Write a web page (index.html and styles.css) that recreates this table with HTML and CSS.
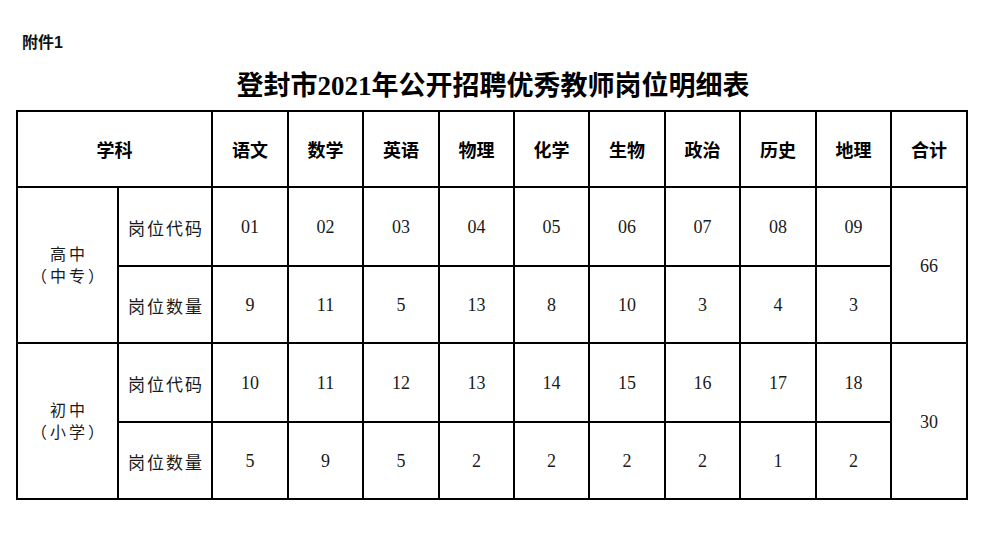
FILE: index.html
```html
<!DOCTYPE html>
<html lang="zh-CN">
<head>
<meta charset="utf-8">
<title>登封市2021年公开招聘优秀教师岗位明细表</title>
<link rel="stylesheet" href="styles.css">
</head>
<body>
<div class="page">
  <div class="note">附件1</div>
  <h1 class="title">登封市2021年公开招聘优秀教师岗位明细表</h1>
  <table class="grid">
    <colgroup>
      <col class="c1"><col class="c2">
      <col class="cw"><col class="cn"><col class="cw"><col class="cn"><col class="cn">
      <col class="cw"><col class="cn"><col class="cw"><col class="cn"><col class="cw">
    </colgroup>
    <thead>
      <tr class="head">
        <th colspan="2">学科</th>
        <th>语文</th><th>数学</th><th>英语</th><th>物理</th><th>化学</th>
        <th>生物</th><th>政治</th><th>历史</th><th>地理</th><th>合计</th>
      </tr>
    </thead>
    <tbody>
      <tr class="r1">
        <td rowspan="2" class="level">高中<br>（中专）</td>
        <td class="label">岗位代码</td>
        <td>01</td><td>02</td><td>03</td><td>04</td><td>05</td><td>06</td><td>07</td><td>08</td><td>09</td>
        <td rowspan="2">66</td>
      </tr>
      <tr class="r2">
        <td class="label">岗位数量</td>
        <td>9</td><td>11</td><td>5</td><td>13</td><td>8</td><td>10</td><td>3</td><td>4</td><td>3</td>
      </tr>
      <tr class="r1">
        <td rowspan="2" class="level">初中<br>（小学）</td>
        <td class="label">岗位代码</td>
        <td>10</td><td>11</td><td>12</td><td>13</td><td>14</td><td>15</td><td>16</td><td>17</td><td>18</td>
        <td rowspan="2">30</td>
      </tr>
      <tr class="r2">
        <td class="label">岗位数量</td>
        <td>5</td><td>9</td><td>5</td><td>2</td><td>2</td><td>2</td><td>2</td><td>1</td><td>2</td>
      </tr>
    </tbody>
  </table>
</div>
</body>
</html>
```

FILE: styles.css
```css
html, body {
  margin: 0;
  padding: 0;
  background: #fff;
}

.page {
  padding: 33px 0 0 16px;
  width: 954px;
}

.note {
  font-family: "Liberation Sans", "Noto Sans CJK SC", sans-serif;
  font-weight: bold;
  font-size: 16px;
  line-height: 20px;
  color: #111;
  padding-left: 6px;
}

.title {
  margin: 15px 0 0 0;
  font-family: "Liberation Serif", "Noto Sans CJK SC", serif;
  font-weight: bold;
  font-size: 27px;
  line-height: 36px;
  text-align: center;
  color: #000;
  height: 42px;
}

.grid {
  border-collapse: collapse;
  table-layout: fixed;
  width: 952px;
  font-family: "Liberation Serif", "Noto Sans CJK SC", serif;
  color: #1a1a1a;
}

.c1 { width: 101px; }
.c2 { width: 94px; }
.cw { width: 76px; }
.cn { width: 75px; }

.grid th,
.grid td {
  border: 2px solid #000;
  text-align: center;
  vertical-align: middle;
  padding: 0;
}

.grid th {
  font-weight: bold;
  font-size: 18px;
  color: #000;
}

.head { height: 76px; }
.r1 { height: 79px; }
.r2 { height: 77px; }

.grid td {
  font-size: 18px;
  padding-top: 2px;
}

.grid td.label {
  font-size: 17px;
  letter-spacing: 2px;
  padding-left: 2px;
}

.grid td.level {
  font-size: 16px;
  line-height: 22px;
  letter-spacing: 3px;
  padding-left: 3px;
}
```
